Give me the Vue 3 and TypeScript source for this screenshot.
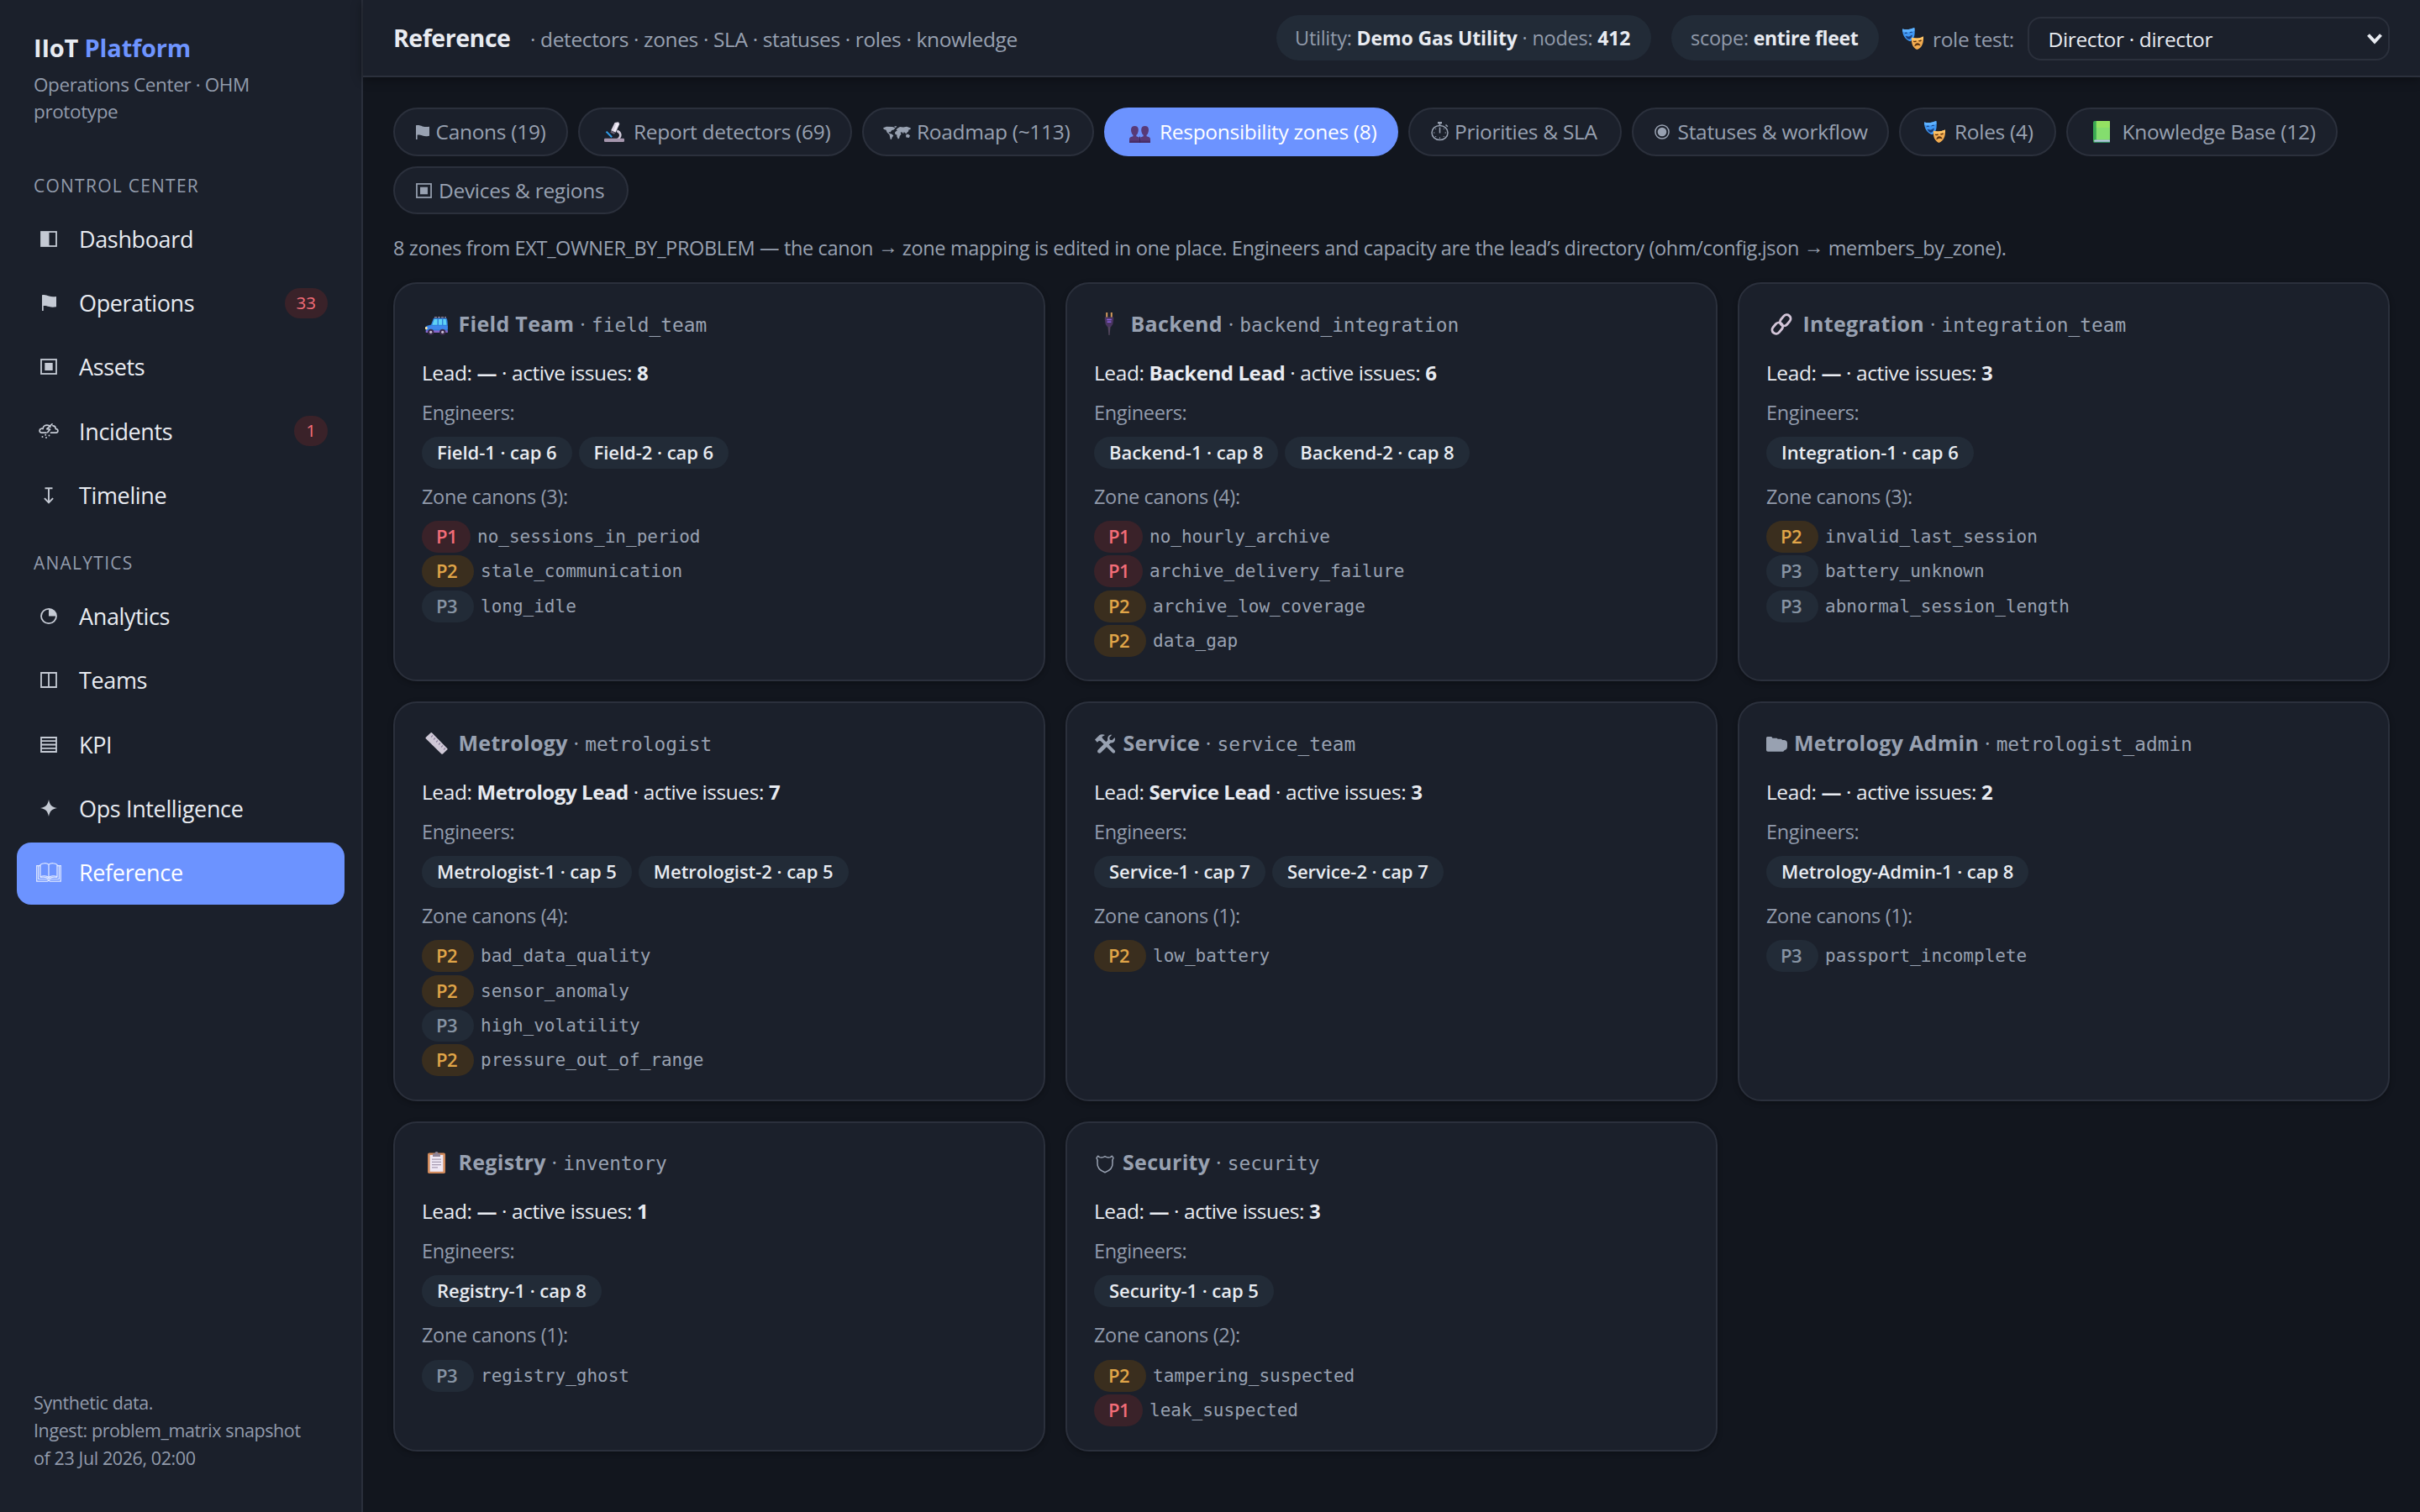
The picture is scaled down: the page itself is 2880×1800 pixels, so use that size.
<script setup lang="ts">
import { ref } from 'vue'

interface Glyph { box: string; body: string }
interface Placed { glyph: string; w: number; h: number; slot: number; left: number; shift: number }
interface NavItem { label: string; glyph: string; w: number; h: number; badge?: string; active?: boolean }
interface Tab { label: string; width: number; icon: Placed; active?: boolean }
interface Canon { level: 'P1' | 'P2' | 'P3'; name: string }
interface Zone {
  name: string; code: string; icon: Placed; lead: string; issues: number
  engineers: string[]; canons: Canon[]
}

const glyphs: Record<string, Glyph> = {
  half: { box: '0 0 20 19', body: '<rect x="1" y="1" width="18" height="17" fill="none" stroke="currentColor" stroke-width="1.8"/><rect x="1" y="1" width="9.5" height="17" fill="currentColor"/>' },
  flag: { box: '0 0 17 18', body: '<path d="M0 0.3C3.5-.4 5.4.6 8.4 1.5c3 .9 5.6.8 8.6.4v11.6c-3.2.6-5.8.6-8.6-.2-2.8-.7-4.600-1.300-6.700-.9V18H0z" fill="currentColor"/>' },
  nested: { box: '0 0 20 19', body: '<rect x="1" y="1" width="18" height="17" fill="none" stroke="currentColor" stroke-width="1.8"/><rect x="5.3" y="5" width="9.4" height="9" fill="currentColor"/>' },
  storm: { box: '0 0 24 18', body: '<g fill="none" stroke="currentColor" stroke-width="1.7" stroke-linejoin="round" stroke-linecap="round"><path d="M9 11.2H3.2A2.5 2.5 0 0 1 3 6.300C4 6 4.600 6.300 5.100 6.500 5.300 3.200 8.100 1.700 10.600 2.100c1.600.2 2.700 1 3.400 2.100M14.500 11.200H20.600c3.300-.2 3-4.700-.4-4.600.1-2.200-1.300-3.700-3.400-3.800"/><path d="M16 .8 9.800 6.600l3.700.5-2.900 3.600"/></g><g fill="currentColor"><circle cx="4.500" cy="16" r="1"/><circle cx="8.200" cy="13.800" r="1"/><circle cx="9" cy="17" r="1"/><circle cx="12.500" cy="14.500" r="1"/></g>' },
  downbar: { box: '0 0 12 20', body: '<path d="M1.500 1.200H10.500M6 1.200V18M.9 13.200 6 18.400 11.100 13.200" fill="none" stroke="currentColor" stroke-width="1.900"/>' },
  quarter: { box: '0 0 20 19', body: '<ellipse cx="10" cy="9.500" rx="9" ry="8.600" fill="none" stroke="currentColor" stroke-width="1.800"/><path d="M10 .5a9.200 9 0 0 1 9.200 9H10z" fill="currentColor"/>' },
  split: { box: '0 0 20 19', body: '<path d="M1 1H19V18H1ZM10 1V18" fill="none" stroke="currentColor" stroke-width="1.800"/>' },
  lines: { box: '0 0 20 19', body: '<path d="M1 1H19V18H1ZM1 5.200H19M1 9.500H19M1 13.800H19" fill="none" stroke="currentColor" stroke-width="1.800"/>' },
  star: { box: '0 0 20 20', body: '<path d="M10 0C11.300 6.500 13.500 8.700 20 10 13.500 11.300 11.300 13.500 10 20 8.700 13.500 6.500 11.300 0 10 6.500 8.700 8.700 6.500 10 0z" fill="currentColor"/>' },
  book: { box: '0 0 30 23', body: '<g fill="none" stroke="currentColor" stroke-width="1.200"><path d="M15 2.200C12.500.2 7.500.2 5 2.400V16.800C8 15.400 12.500 15.600 15 17.400 17.500 15.600 22 15.400 25 16.800V2.400C22.500.2 17.500.2 15 2.200V17.400"/><path d="M5 3.600H2.700V19.500H13.200C14.200 20.800 15.800 20.800 16.800 19.500H27.300V3.600H25"/><path d="M2.700 3.600H.7V22.200H13.500L15 21.300 16.500 22.200H29.300V3.600H27.300M5 17.500C8 16.800 12 17 15 18.800 18 17 22 16.800 25 17.500"/></g>' },
  microscope: { box: '0 0 24 24', body: '<path d="M15.500 9.500c5.500 1.500 6.800 7.200 3 11h-4c4.600-2.600 4.800-6.500.3-8.300z" fill="#cfc8d8"/><path d="M12.600 1 17 .2l1.400 2.200-4.700 10.400-5.600-2.600z" fill="#d9d3e2"/><path d="m14.800 1.200 2.600 1.300-4.200 9.400-1.800-.8z" fill="#f4f0f8"/><path d="m1.800 12.200 1.500-1.100 6.600 6.400-1.500 1.500z" fill="#2f9be8"/><path d="M8.300 10.800 13 13l-1 1.800-4.600-2z" fill="#6c6478"/><rect x="0" y="19.800" width="24" height="4.200" rx="1.200" fill="#a596ad"/>' },
  map: { box: '0 0 33 17', body: '<g fill="currentColor"><path d="M0 2.500 4 .8l7 .2 3.600 1.500-2 2.300-2.200.5-1.800 2.600-2.100-.5.8 1.800 3.300 1.200 1.700 1.700-1.600 2.200-.9 2.700h-1L8 13.500l-.5-2.600L4.700 8.200 3.500 5 1 4.200z"/><path d="m13 .4 3.200-.4L15 2.300z"/><path d="m17 3 3-2 4 .6L28 .9l5 1.700-.8 1.800-1.600.2-.6 2.300-2 1.800-.8 1.600-1-1.900-1.600-.8-.5 2.300-1.800-2.100-1.700.5.900 2-1.800 2.500-.5 2.500-1.300 1.300-1.500-3-.1-2.500-2-.8-.2-2.300 1.600-1.700 1.400-.3-1.600-1z"/><path d="m27 11.500 2.500-1.300 2.500 2-1.200 2.800-3.400-.6z"/></g>' },
  people: { box: '0 0 25 20', body: '<g fill="#583a78"><path d="M2 4.200C2 1.500 3.800 0 6.400 0s4.400 1.500 4.400 4.200c0 2.700-.8 5.400-2.500 6.600v1.400l3.400 1.300 1 6.500H0v-4.200c0-1.500.8-2.300 2-2.700l2.500-.9v-1.400C2.800 9.600 2 6.900 2 4.200z"/><path d="M14.200 4.200C14.200 1.500 16 0 18.600 0S23 1.500 23 4.200c0 2.700-.8 5.400-2.500 6.600v1.400l2.500.9c1.200.4 2 1.200 2 2.700V20H12.700l.6-6.500 3.400-1.300v-1.400c-1.700-1.200-2.500-3.900-2.500-6.600z"/></g><path d="M0 17.500h25V20H0z" fill="#43285f" opacity=".7"/><path d="M12.500 12.600V20" stroke="#3d2458" stroke-width="1"/>' },
  watch: { box: '0 0 21 22', body: '<g fill="none" stroke="currentColor" stroke-width="1.500"><ellipse cx="10.500" cy="13" rx="9.500" ry="8.600"/><path d="M10.500 6.500V13.500M10.500 1.500V4M17.500 3.500 19.800 5.800"/><path d="M8 1.200H13" stroke-width="2.400"/></g><g stroke="currentColor" stroke-width="1"><path d="M3 13h1.400M16.600 13H18M10.500 18.500v1.500M5.200 8l1 1M15.800 8l-1 1M5.200 18l1-1M15.800 18l-1-1"/></g>' },
  fisheye: { box: '0 0 18 18', body: '<circle cx="9" cy="9" r="8.100" fill="none" stroke="currentColor" stroke-width="1.500"/><circle cx="9" cy="9" r="5.300" fill="currentColor"/>' },
  masks: { box: '0 0 25 26', body: '<path d="M0 1.400C4.800 2.600 9.500 2 14.300 0c1 6.500.6 13.300-4.800 16.200C3.600 14.700-.2 8.600 0 1.400z" fill="#3f97f3"/><path d="M0 1.400C4.800 2.600 9.500 2 14.300 0l.3 3.500C9.500 5.500 5 5.800.1 4.600z" fill="#5eb2ff"/><path d="M2.700 6.900q1.600-1.700 3.100-.4M8.600 6.100q1.700-1.700 3.200-.5M4 10.200q4 2.200 7.400-1.100-.9 4.200-3.300 4.400-2.600-.2-4.100-3.300z" fill="#163a78" stroke="#163a78" stroke-width=".8"/><path d="M11 11.800c4.600 1.200 9 .9 14-1.200.4 6.900-1.300 13.500-7.600 15.300-5.300-2.200-7-7.700-6.400-14.100z" fill="#f3ac50"/><path d="M11 11.800c4.600 1.200 9 .9 14-1.200v3c-5 1.800-9.500 2.200-14 1z" fill="#ffc566"/><path d="M13.200 16q1.700 1.300 3.300-.2M19.300 15.500q1.800.8 3.200-.8" fill="none" stroke="#5a3210" stroke-width="1.300"/><path d="M14.300 22.300c.6-4.800 5.900-5.500 7.300-.7-2.500-1.400-4.800-1-7.300.7z" fill="#5a3210"/>' },
  greenbook: { box: '0 0 20 26', body: '<rect x="0" y="0" width="20" height="26" rx="2" fill="#3aa852"/><rect x="3.800" y="0" width="16.200" height="22.600" rx="1" fill="#84dd6e"/><path d="M3.800 0H19q1 0 1 1v7H3.800z" fill="#9be45c" opacity=".7"/><path d="M2 22.400H20V25H3a1.300 1.300 0 0 1-1-2.600z" fill="#b9c6e4"/><path d="M1 24.800H20V26H2z" fill="#2c8a58"/>' },
  car: { box: '0 0 27 22', body: '<path d="M11 .8H25" stroke="#8b7e96" stroke-width="1.400" stroke-dasharray="3 1"/><path d="M10 1.800H24.500C26 1.800 26.600 3.600 26.800 8.500V18.500H.8V12.600q0-1.400 1.600-1.800L7 9.600z" fill="#2f7fdc"/><path d="M10.800 3H14.500V9.800H8.400zM16 3H20V9.800H16zM21.400 3h3.200l.9 6.800h-4.100z" fill="#5fd2f5"/><path d="M.8 12.600 7 10.800H26.800V15H.8z" fill="#3f86ea"/><rect x="0" y="12" width="2.600" height="3.200" rx="1" fill="#ffe9a8"/><path d="M.8 16.400H26.800V19H.8z" fill="#8a63c9"/><circle cx="6.700" cy="18.300" r="3.600" fill="#3c2a4a"/><circle cx="6.700" cy="18.300" r="1.600" fill="#cabfd8"/><circle cx="20.700" cy="18.300" r="3.600" fill="#3c2a4a"/><circle cx="20.700" cy="18.300" r="1.600" fill="#cabfd8"/>' },
  plug: { box: '0 0 12 27', body: '<path d="M3.200 0V6M8.800 0V6" stroke="#d39a5c" stroke-width="2"/><path d="M.8 5.500H11.200V8.500L10.300 14 8 17.200H4L1.700 14 .8 8.500z" fill="#4a3560"/><path d="M3.200 8.500H8.800M3.600 11.200H8.400" stroke="#8a5fe0" stroke-width="1.400"/><path d="M4.500 17H7.500L6.600 27H5.400z" fill="#51455c"/>' },
  link: { box: '0 0 26 26', body: '<g fill="none" stroke="#d3c5d8" stroke-width="2.900"><rect x="-4.700" y="-7.200" width="9.400" height="14.400" rx="4.700" transform="translate(17.700 8.300) rotate(40)"/><rect x="-4.700" y="-7.200" width="9.400" height="14.400" rx="4.700" transform="translate(8.300 17.700) rotate(40)"/></g>' },
  ruler: { box: '0 0 27 26', body: '<path d="M.8 5.800 6.400.5q1-.8 1.800.1L26.300 18.900q.7.900-.1 1.700L21 25.500q-.9.700-1.700-.1L.7 7.300q-.6-.8.1-1.500z" fill="#cfc8d6"/><path d="m9 3.500-2 2M12 6.500l-2 2M15 9.500l-2 2M18 12.500l-2 2M21 15.500l-2 2M24 18.500l-2 2" stroke="#8d81a0" stroke-width="1.100"/>' },
  tools: { box: '0 0 25 23', body: '<g fill="currentColor"><path d="m20.300.8-3.100 3.300.6 2.600 2.700.5 3.100-3.200c1.300 3.400-.9 7-4.900 6.400L7.400 21.800c-2.500 2.500-5.900-.6-3.500-3.300L15.300 7.200C14.500 3 17 .2 20.300.8z"/><path d="M0 6.600 5.300 1.200C7.600-.3 10 0 12 1L8.300 3.300l1.200 2.200L23.800 19.600q1 1.600-.3 2.700-1.300 1-2.700-.2L6.900 8.200 5 7.800 2.800 9.700z"/></g>' },
  folders: { box: '0 0 26 18', body: '<path d="M0 1.500Q0 0 1.500 0H6.500l1.300 1.700H13l1.300 1H18.500l1.500 1.300h2.500Q26 4.600 26 8v3.500Q26 15.400 22.800 16l-1.800 1.800H2Q0 17.800 0 16z" fill="currentColor"/>' },
  clipboard: { box: '0 0 21 26', body: '<rect x="0" y="1.500" width="21" height="24.500" rx="1.800" fill="#d18a5c"/><rect x="2.600" y="4" width="15.800" height="19.800" fill="#efe8f5"/><path d="M6 2.600h2.700a1.900 1.900 0 0 1 3.600 0H15V6H6z" fill="#8f8497"/><circle cx="10.500" cy="2" r="2" fill="#8f8497"/><path d="M5 9.200H16M5 12.400H16M5 15.600H16M5 18.800H12" stroke="#a79bb2" stroke-width="1.300"/>' },
  shield: { box: '0 0 22 22', body: '<path d="M2.600 1.200 4.500 2.600Q8 3.600 11 1.600 14 3.600 17.500 2.600L19.400 1.200 21 3.600Q19.500 5.400 20 9.500C20.500 15 16 18.800 11 20.800 6 18.800 1.500 15 2 9.500 2.500 5.400 1 3.600 1 3.600z" fill="none" stroke="currentColor" stroke-width="1.500" stroke-linejoin="round"/>' },
}

const place = (glyph: string, w: number, h: number, slot: number, left: number, shift: number): Placed =>
  ({ glyph, w, h, slot, left, shift })

const iconStyle = (p: Placed) => ({ marginLeft: `${p.left}px`, marginTop: `${p.shift * 2}px` })

const groups: { title: string; items: NavItem[] }[] = [
  {
    title: 'CONTROL CENTER',
    items: [
      { label: 'Dashboard', glyph: 'half', w: 20, h: 19 },
      { label: 'Operations', glyph: 'flag', w: 17, h: 19, badge: '33' },
      { label: 'Assets', glyph: 'nested', w: 20, h: 19 },
      { label: 'Incidents', glyph: 'storm', w: 24, h: 18, badge: '1' },
      { label: 'Timeline', glyph: 'downbar', w: 12, h: 20 },
    ],
  },
  {
    title: 'ANALYTICS',
    items: [
      { label: 'Analytics', glyph: 'quarter', w: 20, h: 19 },
      { label: 'Teams', glyph: 'split', w: 20, h: 19 },
      { label: 'KPI', glyph: 'lines', w: 20, h: 19 },
      { label: 'Ops Intelligence', glyph: 'star', w: 20, h: 20 },
      { label: 'Reference', glyph: 'book', w: 30, h: 23, active: true },
    ],
  },
]

const tabs: Tab[] = [
  { label: 'Canons (19)', width: 208, icon: place('flag', 16, 17, 24.5, 1, 0.5) },
  { label: 'Report detectors (69)', width: 326, icon: place('microscope', 24, 24, 40, 5, 0.5) },
  { label: 'Roadmap (~113)', width: 276, icon: place('map', 33, 16, 39, -1, 1) },
  { label: 'Responsibility zones (8)', width: 350, icon: place('people', 25, 20, 40, 4, 3), active: true },
  { label: 'Priorities & SLA', width: 254, icon: place('watch', 21, 22, 29, 1, -0.5) },
  { label: 'Statuses & workflow', width: 306, icon: place('fisheye', 18, 18, 28.5, 1, 0.5) },
  { label: 'Roles (4)', width: 186.5, icon: place('masks', 25, 26, 40, 4, 0.5) },
  { label: 'Knowledge Base (12)', width: 323.5, icon: place('greenbook', 20, 26, 41, 6, 0) },
  { label: 'Devices & regions', width: 280, icon: place('nested', 19, 18, 28, 1, 1) },
]

const P = (level: Canon['level'], name: string): Canon => ({ level, name })

const zones: Zone[] = [
  {
    name: 'Field Team', code: 'field_team', icon: place('car', 27, 22, 43.5, 4, 2), lead: '—', issues: 8,
    engineers: ['Field-1 · cap 6', 'Field-2 · cap 6'],
    canons: [P('P1', 'no_sessions_in_period'), P('P2', 'stale_communication'), P('P3', 'long_idle')],
  },
  {
    name: 'Backend', code: 'backend_integration', icon: place('plug', 12, 27, 43.5, 12, 0), lead: 'Backend Lead', issues: 6,
    engineers: ['Backend-1 · cap 8', 'Backend-2 · cap 8'],
    canons: [P('P1', 'no_hourly_archive'), P('P1', 'archive_delivery_failure'), P('P2', 'archive_low_coverage'), P('P2', 'data_gap')],
  },
  {
    name: 'Integration', code: 'integration_team', icon: place('link', 26, 26, 43.5, 5, 0), lead: '—', issues: 3,
    engineers: ['Integration-1 · cap 6'],
    canons: [P('P2', 'invalid_last_session'), P('P3', 'battery_unknown'), P('P3', 'abnormal_session_length')],
  },
  {
    name: 'Metrology', code: 'metrologist', icon: place('ruler', 27, 26, 43.5, 4, 0), lead: 'Metrology Lead', issues: 7,
    engineers: ['Metrologist-1 · cap 5', 'Metrologist-2 · cap 5'],
    canons: [P('P2', 'bad_data_quality'), P('P2', 'sensor_anomaly'), P('P3', 'high_volatility'), P('P2', 'pressure_out_of_range')],
  },
  {
    name: 'Service', code: 'service_team', icon: place('tools', 25, 23, 34.5, 1, 1), lead: 'Service Lead', issues: 3,
    engineers: ['Service-1 · cap 7', 'Service-2 · cap 7'],
    canons: [P('P2', 'low_battery')],
  },
  {
    name: 'Metrology Admin', code: 'metrologist_admin', icon: place('folders', 25, 18, 33, 0, 1.5), lead: '—', issues: 2,
    engineers: ['Metrology-Admin-1 · cap 8'],
    canons: [P('P3', 'passport_incomplete')],
  },
  {
    name: 'Registry', code: 'inventory', icon: place('clipboard', 21, 26, 43.5, 7, 0), lead: '—', issues: 1,
    engineers: ['Registry-1 · cap 8'],
    canons: [P('P3', 'registry_ghost')],
  },
  {
    name: 'Security', code: 'security', icon: place('shield', 22, 22, 34, 2, 1.5), lead: '—', issues: 3,
    engineers: ['Security-1 · cap 5'],
    canons: [P('P2', 'tampering_suspected'), P('P1', 'leak_suspected')],
  },
]

const role = ref('director')
</script>

<template>
  <div class="app">
    <aside class="sidebar">
      <div class="brand">IIoT <span>Platform</span></div>
      <div class="tagline">Operations Center · OHM<br>prototype</div>
      <nav v-for="group in groups" :key="group.title" class="group">
        <div class="group-title">{{ group.title }}</div>
        <a v-for="item in group.items" :key="item.label" class="nav-item" :class="{ active: item.active }">
          <span class="nav-icon">
            <svg :width="item.w" :height="item.h" :viewBox="glyphs[item.glyph].box" preserveAspectRatio="none" v-html="glyphs[item.glyph].body" />
          </span>
          <span class="nav-label">{{ item.label }}</span>
          <span v-if="item.badge" class="nav-badge">{{ item.badge }}</span>
        </a>
      </nav>
      <div class="foot">Synthetic data.<br>Ingest: problem_matrix snapshot<br>of 23 Jul 2026, 02:00</div>
    </aside>

    <div class="main">
      <header class="topbar">
        <h1>Reference</h1>
        <span class="crumbs">· detectors · zones · SLA · statuses · roles · knowledge</span>
        <div class="chip utility">Utility: <b>Demo Gas Utility</b> · nodes: <b>412</b></div>
        <div class="chip scope">scope: <b>entire fleet</b></div>
        <label class="role-label">
          <svg width="25" height="26" :viewBox="glyphs.masks.box" v-html="glyphs.masks.body" />
          <span>role test:</span>
        </label>
        <div class="select">
          <select v-model="role"><option value="director">Director · director</option></select>
          <svg class="chevron" width="20" height="14" viewBox="0 0 20 14"><path d="M2.500 2.500 10 10.500 17.500 2.500" fill="none" stroke="currentColor" stroke-width="4" /></svg>
        </div>
      </header>

      <section class="content">
        <div class="tabs">
          <button v-for="tab in tabs" :key="tab.label" class="tab" :class="{ active: tab.active }" :style="{ width: `${tab.width}px` }">
            <span class="icon" :style="{ width: `${tab.icon.slot}px` }">
              <svg :width="tab.icon.w" :height="tab.icon.h" :viewBox="glyphs[tab.icon.glyph].box" preserveAspectRatio="none" :style="iconStyle(tab.icon)" v-html="glyphs[tab.icon.glyph].body" />
            </span>
            <span>{{ tab.label }}</span>
          </button>
        </div>

        <p class="note">8 zones from EXT_OWNER_BY_PROBLEM — the canon <span class="arrow">→</span> zone mapping is edited in one place. Engineers and capacity are the lead’s directory (ohm/config.json <span class="arrow">→</span> members_by_zone).</p>

        <div class="grid">
          <article v-for="zone in zones" :key="zone.code" class="card">
            <h2>
              <span class="icon" :style="{ width: `${zone.icon.slot}px` }">
                <svg :width="zone.icon.w" :height="zone.icon.h" :viewBox="glyphs[zone.icon.glyph].box" preserveAspectRatio="none" :style="iconStyle(zone.icon)" v-html="glyphs[zone.icon.glyph].body" />
              </span>
              <span>{{ zone.name }} <i>· <code>{{ zone.code }}</code></i></span>
            </h2>
            <p class="lead">Lead: <b>{{ zone.lead }}</b> · active issues: <b>{{ zone.issues }}</b></p>
            <p class="caption engineers-caption">Engineers:</p>
            <div class="engineers">
              <span v-for="engineer in zone.engineers" :key="engineer" class="pill">{{ engineer }}</span>
            </div>
            <p class="caption canons-caption">Zone canons ({{ zone.canons.length }}):</p>
            <ul class="canons">
              <li v-for="canon in zone.canons" :key="canon.name">
                <span class="pill level" :class="canon.level.toLowerCase()">{{ canon.level }}</span>
                <code>{{ canon.name }}</code>
              </li>
            </ul>
          </article>
        </div>
      </section>
    </div>
  </div>
</template>

<style>
html, body { margin: 0; background: #12161e; }
</style>

<style scoped>
.app {
  display: flex;
  height: 1800px;
  overflow: hidden;
  background: #12161e;
  color: #e8ebf1;
  font-family: "Open Sans", "Noto Sans", sans-serif;
  font-size: 24px;
}
.app * { box-sizing: border-box; }
svg { display: block; flex: none; overflow: visible; }
p, h1, h2, ul { margin: 0; padding: 0; }

.sidebar {
  display: flex;
  flex-direction: column;
  flex: none;
  width: 432px;
  padding: 37px 20px 48px;
  border-right: 2px solid #2b303c;
  background: #1b202b;
}
.brand { padding-left: 20px; font-size: 29px; font-weight: 700; line-height: 40px; letter-spacing: -0.18px; }
.brand span { color: #6e94ff; }
.tagline { margin-top: 7.5px; padding-left: 20px; color: #929bab; font-size: 22.5px; line-height: 32px; letter-spacing: -0.38px; }
.group { display: flex; flex-direction: column; gap: 2.4px; margin-top: 27.5px; }
.tagline + .group { margin-top: 57px; }
.group-title { margin-bottom: 10.3px; padding-left: 20px; color: #929bab; font-size: 21px; line-height: 30px; letter-spacing: 1.25px; }
.group + .group .group-title { margin-bottom: 9.600px; }
.nav-item { display: flex; align-items: center; height: 74px; padding: 0 20px 2px; border-radius: 17px; }
.nav-item.active { background: #6c93ff; color: #fff; }
.nav-icon { display: flex; justify-content: center; width: 36px; margin-right: 18px; color: #c5cad4; }
.active .nav-icon { color: #e3eaff; }
.nav-label { flex: 1; font-size: 27px; letter-spacing: -0.36px; }
.nav-badge { height: 36px; padding: 0 14px; border-radius: 18px; background: #3a2229; color: #f26d78; font-size: 20.5px; line-height: 35px; }
.foot { margin-top: auto; padding-left: 20px; color: #929bab; font-size: 21.5px; line-height: 33px; letter-spacing: -0.4px; }

.main { flex: 1; min-width: 0; }
.topbar {
  display: flex;
  align-items: center;
  height: 92px;
  padding: 0 36px;
  border-bottom: 2px solid #2b303c;
  background: #1b202b;
  box-shadow: 0 2px 12px rgba(0, 0, 0, 0.4);
}
h1 { font-size: 28.5px; font-weight: 700; letter-spacing: -0.45px; }
.crumbs { flex: 1; margin-left: 23.5px; color: #98a1b1; font-size: 24.5px; letter-spacing: -0.36px; padding-top: 2px; }
.chip { height: 54px; padding: 0 22px; border-radius: 27px; background: #222b37; color: #929bab; font-size: 23.5px; line-height: 55px; letter-spacing: -0.25px; white-space: nowrap; }
.chip b { color: #e8ebf1; font-size: 23px; letter-spacing: -0.1px; }
.utility { width: 446px; margin-right: 24px; }
.scope { width: 247px; margin-right: 28px; padding-left: 23px; }
.scope b { letter-spacing: -0.35px; }
.role-label { display: flex; align-items: center; gap: 11px; width: 149px; padding-top: 2px; color: #929bab; font-size: 24.5px; letter-spacing: -0.35px; white-space: nowrap; }
.select { position: relative; width: 431px; height: 52px; margin-top: 2px; }
.select select { appearance: none; width: 100%; height: 100%; padding: 0 22.500px; border: 2px solid #2b303c; border-radius: 16px; background: #1b202b; color: #e8ebf1; font: 24.5px "Open Sans", sans-serif; letter-spacing: -0.35px; }
.chevron { position: absolute; top: 19px; right: 8px; }

.content { padding: 36px 36px 0; }
.tabs { display: flex; flex-wrap: wrap; gap: 12px; }
.tab { display: flex; align-items: center; height: 57.5px; padding: 0 0 0 24px; border: 2px solid #2b303c; border-radius: 29px; background: #1b202b; color: #98a1b1; font: 24.5px "Open Sans", sans-serif; letter-spacing: -0.3px; white-space: nowrap; }
.tab.active { border-color: #6c93ff; background: #6c93ff; color: #fff; }
.icon { display: flex; align-items: center; flex: none; }
.note { margin: 22px 0 23px; color: #98a1b1; font-size: 23.5px; line-height: 36px; letter-spacing: -0.347px; white-space: nowrap; }
.arrow { display: inline-block; line-height: 1; transform: translateY(-2px); }

.grid { display: grid; grid-template-columns: repeat(3, 776px); gap: 24px; }
.card { padding: 29.5px 32px 27.5px; border: 2px solid #2b303c; border-radius: 28px; background: #1b202b; box-shadow: 0 2px 6px rgba(0, 0, 0, 0.3); }
h2 { display: flex; align-items: center; height: 36px; color: #98a1b1; font-size: 25px; font-weight: 700; line-height: 36px; letter-spacing: 0.3px; white-space: nowrap; }
h2 i { font-style: normal; font-weight: 400; }
code { font-family: "DejaVu Sans Mono", monospace; letter-spacing: 0; }
h2 code { font-size: 22.8px; }
.lead { margin-top: 22px; font-size: 24.5px; line-height: 36px; letter-spacing: -0.42px; }
.lead b { font-size: 24px; letter-spacing: -0.4px; }
.caption { color: #929bab; font-size: 23.5px; line-height: 36px; letter-spacing: -0.35px; }
.engineers-caption { margin-top: 11px; }
.engineers { display: flex; gap: 8px; margin-top: 11px; }
.pill { height: 38px; padding: 0 18px; border-radius: 19px; background: #222b37; font-size: 22px; font-weight: 600; line-height: 36px; letter-spacing: -0.04px; white-space: nowrap; }
.canons-caption { margin-top: 15.2px; }
.canons { display: flex; flex-direction: column; gap: 3.3px; margin-top: 11.3px; list-style: none; }
.canons li { display: flex; align-items: center; height: 38px; }
.canons code { margin-left: 8px; color: #98a1b1; font-size: 21px; }
.level { width: 62px; padding: 0 0 0 17px; letter-spacing: -0.6px; }
.p1 { width: 58px; background: #3a2229; color: #f26d78; }
.p2 { background: #3a2e1e; color: #e0a548; }
.p3 { color: #8794a4; }
</style>
